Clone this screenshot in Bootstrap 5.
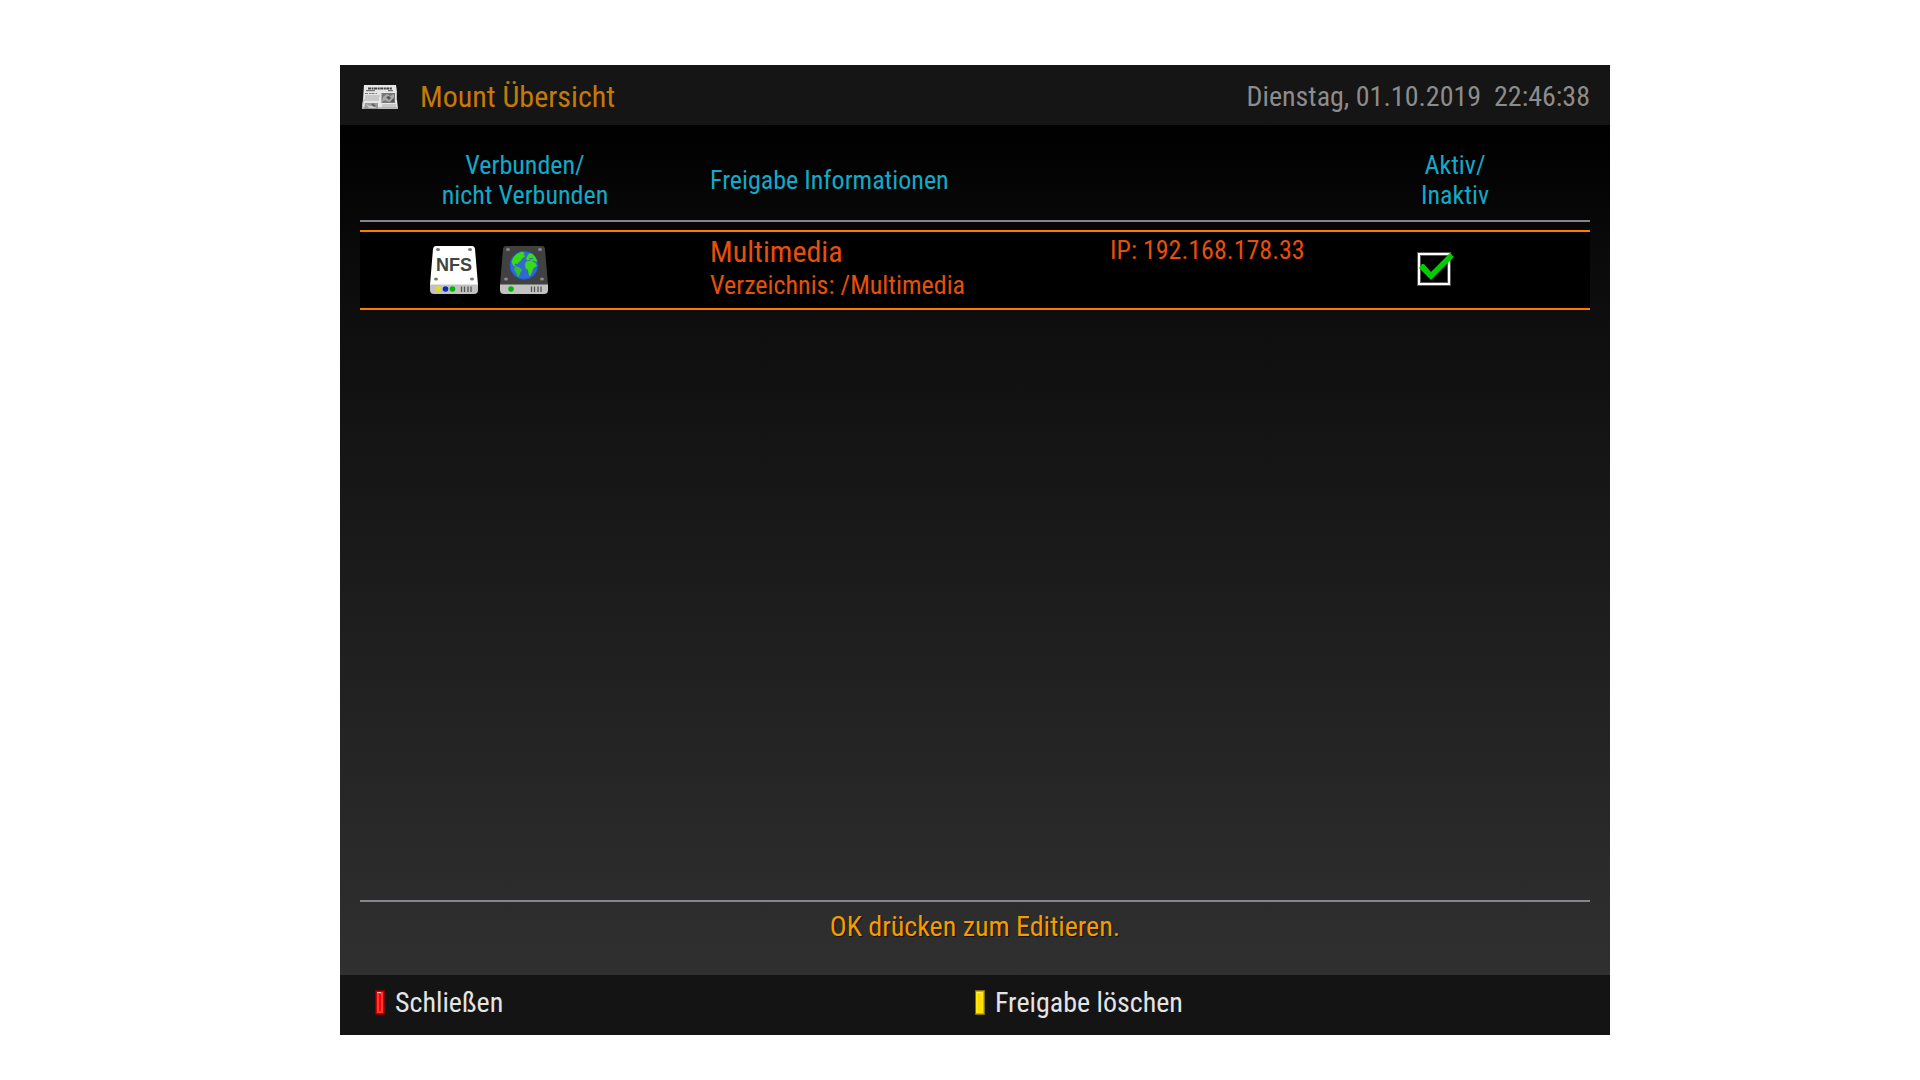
<!DOCTYPE html>
<html lang="de">
<head>
<meta charset="utf-8">
<meta name="viewport" content="width=device-width, initial-scale=1">
<title>Mount Übersicht</title>
<link href="https://cdn.jsdelivr.net/npm/bootstrap@5.3.0/dist/css/bootstrap.min.css" rel="stylesheet">
<style>
body { background: #fff; font-family: "Roboto Condensed", Roboto, "Liberation Sans", sans-serif; }
.stage { display: grid; min-height: 100vh; grid-template-columns: 340fr 1270fr 310fr; grid-template-rows: 65fr 970fr 45fr; }
.panel { grid-column: 2; grid-row: 2; background: linear-gradient(#000 60px, #0d0d0d 24%, #303030 calc(100% - 60px)); }
.bar { height: 60px; background: #151515; padding: 4px 20px 0 22px; gap: 22px; }
.title { font-size: 30px; line-height: 36px; font-weight: 400; color: #c47a08; }
.clock { font-size: 28px; line-height: 36px; color: #8c8c8c; white-space: pre; }
.content { padding: 0 20px; }
.mounts { table-layout: fixed; border-collapse: separate; border-spacing: 0; font-size: 26px; }
.mounts th { height: 97px; padding: 25px 0 10px; line-height: 30px; font-weight: 400; color: #13a9c8; border-bottom: 2px solid #86848f; }
.mounts tbody::before { content: ""; display: block; height: 8px; }
.mounts td { height: 80px; padding: 0; background: #000; color: #e5500a; border: 0 solid #ff7b00; border-width: 2px 0; }
.mounts .info { padding-left: 20px; }
.c-state { width: 26.83%; } .c-info { width: 32.52%; } .c-ip { width: 18.7%; }
.share { font-size: 30px; line-height: 40px; }
.folder { line-height: 26px; white-space: nowrap; }
.address { line-height: 36px; padding-left: 20px; white-space: nowrap; }
.drives { gap: 22px; padding: 14px 0 0 70px; }
.switch-cell { padding: 20px 0 0 97px; }
.tick { appearance: none; display: block; position: relative; width: 34px; height: 34px; margin: 0; border: 3px solid #fff; outline: 1px solid #555; outline-offset: -1px; background: #000; box-shadow: inset 0 0 0 1px #555; }
.tick:checked::after { content: ""; position: absolute; left: -3px; top: -3px; width: 38px; height: 32px; background: #0c0; clip-path: polygon(5px 12px, 2px 16px, 14px 28px, 37px 5px, 33px 1px, 14px 20px, 7px 12px); }
.hint { border-top: 2px solid #86848f; height: 75px; font-size: 28px; line-height: 50px; color: #f59b00; text-shadow: 1px 1px 1px #111; }
.keys { display: grid; grid-template-columns: 600fr 635fr; height: 60px; background: #141414; padding: 0 0 5px 35px; }
.key { gap: 10px; border: 0; padding: 0; background: none; color: #e4e4e4; font-size: 28px; line-height: 36px; text-align: left; }
</style>
<script src="https://cdn.jsdelivr.net/npm/bootstrap@5.3.0/dist/js/bootstrap.bundle.min.js" defer></script>
</head>
<body>
<div class="stage">
<main class="panel d-flex flex-column">
  <header class="bar d-flex align-items-center">
    <svg class="flex-shrink-0" width="36" height="24" viewBox="0 0 36 24" aria-hidden="true">
      <path fill="#e6e6e6" d="M2 0h32l1 7v8l1 9H0l1-9 .5-8z"/>
      <path fill="#bbb" d="M0 22h36v2H0zM1 15h1l-1 6H0zM34 7h1v8h-1z"/>
      <path fill="none" stroke="#444" stroke-width="2" stroke-dasharray="3 .6 2 .5" d="M6 3.400h24"/>
      <path stroke="#555" d="M4 5.700h9M26 5.700h5"/>
      <path stroke="#777" stroke-dasharray="3 1 2 .5" d="M3 8.500h12"/>
      <path stroke="#aaa" d="M3 11h15M3 13h14M2 15h15M20 20h14M20 22h14"/>
      <path fill="#777" d="M19.500 8H33v10H19.500z"/>
      <path fill="#aaa" d="M21 12l4-3 3 2 4-2v4l-5 4-4-2-3 2z"/>
      <path fill="#555" d="M24 12l3-1 2 2-2 2zM30 15l2-2v4h-3z"/>
      <path fill="#999" d="M3 18h13v6H2z"/>
      <path fill="#ccc" d="M4 19l4 2 4-2 2 4H7z"/>
      <path fill="#666" d="M9 20l2-2 3 3-2 1z"/>
    </svg>
    <h1 class="title mb-0 flex-grow-1 text-nowrap">Mount Übersicht</h1>
    <time class="clock" datetime="2019-10-01T22:46:38">Dienstag, 01.10.2019  22:46:38</time>
  </header>

  <section class="content flex-grow-1 d-flex flex-column">
    <table class="mounts w-100">
      <colgroup><col class="c-state"><col class="c-info"><col class="c-ip"><col></colgroup>
      <thead>
        <tr>
          <th scope="col" class="text-center align-middle">Verbunden/<br>nicht Verbunden</th>
          <th scope="col" colspan="2" class="info align-middle">Freigabe Informationen</th>
          <th scope="col" class="text-center align-middle">Aktiv/<br>Inaktiv</th>
        </tr>
      </thead>
      <tbody>
        <tr>
          <td class="align-top">
            <div class="drives d-flex">
              <svg width="48" height="48" viewBox="0 0 48 48" role="img" aria-label="NFS">
                <path fill="#fff" d="M6 0h36q2.500 0 3 3l3 36H0L3 3q.5-3 3-3z"/>
                <path fill="#c2c2c2" d="M0 38.500h48V44q0 4-4 4H4q-4 0-4-4z"/>
                <g fill="#777"><ellipse cx="8" cy="3.500" rx="2" ry="1.500"/><ellipse cx="40" cy="3.500" rx="2" ry="1.500"/><ellipse cx="6" cy="33" rx="2" ry="1.500"/><ellipse cx="42" cy="33" rx="2" ry="1.500"/></g>
                <text x="24" y="25" text-anchor="middle" font-family="Liberation Sans, sans-serif" font-weight="700" font-size="18" fill="#444">NFS</text>
                <circle cx="8" cy="43" r="2.800" fill="#e2df16"/><circle cx="15.500" cy="43" r="2.800" fill="#0a2bb4"/><circle cx="22.500" cy="43" r="2.800" fill="#00b800"/>
                <path stroke="#555" stroke-width="1.300" d="M31.500 40.500v5.500M34.500 40.500v5.500M38 40.500v5.500M41 40.500v5.500"/>
              </svg>
              <svg width="48" height="48" viewBox="0 0 48 48" role="img" aria-label="Netzwerk">
                <path fill="#414141" d="M6 0h36q2.500 0 3 3l3 36H0L3 3q.5-3 3-3z"/>
                <path fill="#c2c2c2" d="M0 38.500h48V44q0 4-4 4H4q-4 0-4-4z"/>
                <g fill="#888"><ellipse cx="8" cy="3.500" rx="2" ry="1.500"/><ellipse cx="40" cy="3.500" rx="2" ry="1.500"/><ellipse cx="6" cy="33" rx="2" ry="1.500"/><ellipse cx="42" cy="33" rx="2" ry="1.500"/></g>
                <circle cx="24" cy="19.300" r="14" fill="#3468d0" stroke="#1454f0"/>
                <g fill="#38dc12">
                  <path d="M11.500 16l2-5 4-3.500 4-1.700 3 .7-1 2.500 2 1-3.500 2.500-1 2-2 1.500-1.500 2-2-.5-1 1 2 2.500-3-1z"/>
                  <path fill="#2cc42a" d="M14.500 21.500l2-1 3 1 2.700 2.500-1.700 2.500-1.500 4-1 .5-1.500-3.500-2-3z"/>
                  <path d="M26 13l1-2.500 2-3h3l3 3 2 4-.5 1.500-3-1.500-2 .5-2-1.500-2 1z"/>
                  <path d="M26 15.500l5-1 4.500 2.500 1.500 3-3.500 2-1.500 4-1.500 3.500-1.500.5-1-6-2.500-2-.5-3.500z"/>
                </g>
                <path fill="#3468d0" d="M28.500 12.500l3-.8 2.500 1-2.500.8z"/>
                <circle cx="11" cy="43" r="2.800" fill="#00b800"/>
                <path stroke="#555" stroke-width="1.300" d="M31.500 40.500v5.500M34.500 40.500v5.500M38 40.500v5.500M41 40.500v5.500"/>
              </svg>
            </div>
          </td>
          <td class="info align-top"><div class="share">Multimedia</div><div class="folder">Verzeichnis: /Multimedia</div></td>
          <td class="align-top"><div class="address">IP: 192.168.178.33</div></td>
          <td class="align-top"><div class="switch-cell"><input class="tick" type="checkbox" id="share-active" aria-label="Multimedia aktiv" checked></div></td>
        </tr>
      </tbody>
    </table>
    <div class="hint mt-auto text-center">OK drücken zum Editieren.</div>
  </section>

  <footer class="keys">
    <button type="button" class="key d-flex align-items-center">
      <svg width="10" height="25" viewBox="0 0 10 25" aria-hidden="true"><path fill="#700" d="M0 0h10v25H0z"/><path fill="#c00" d="M1 1h8v23H1z"/><path fill="#ff3a32" d="M2 2h6v21H2z"/><path fill="#f00" d="M4 4h2v17H4z"/><path fill="#faa" d="M2 2h4v1H2z"/></svg>
      Schließen</button>
    <button type="button" class="key d-flex align-items-center">
      <svg width="10" height="25" viewBox="0 0 10 25" aria-hidden="true"><path fill="#806c00" d="M0 0h10v25H0z"/><path fill="#c8b000" d="M1 1h8v23H1z"/><path fill="#ffe800" d="M1 2h7v21H1z"/><path fill="#ffd800" d="M3 4h3v17H3z"/><path fill="#fff27a" d="M2 2h4v1H2z"/></svg>
      Freigabe löschen</button>
  </footer>
</main>
</div>
</body>
</html>
